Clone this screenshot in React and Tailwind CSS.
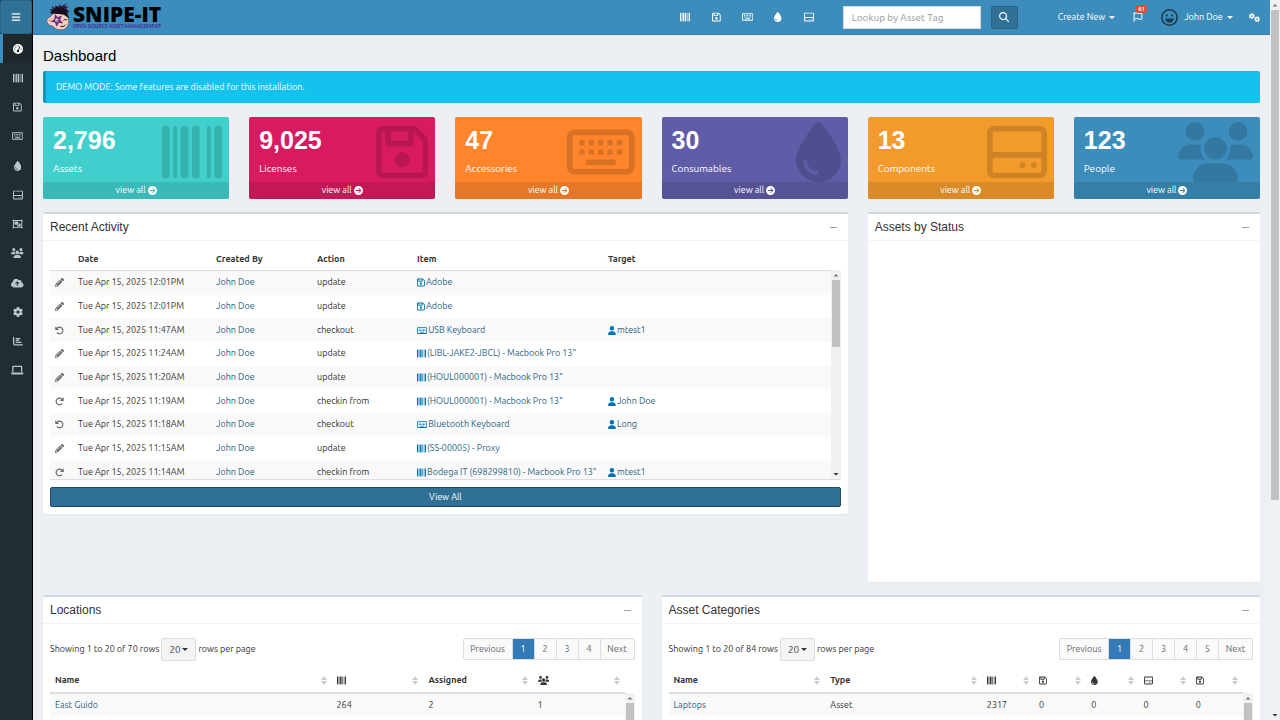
import React from "react";
import { FaPencilAlt } from "react-icons/fa";
import {
    FaArrowRotateLeft,
    FaArrowRotateRight,
    FaBarcode,
    FaBars,
    FaChartBar,
    FaCircleArrowRight,
    FaCloudArrowUp,
    FaDroplet,
    FaGaugeHigh,
    FaGear,
    FaGears,
    FaLaptop,
    FaMagnifyingGlass,
    FaMinus,
    FaRegFaceLaugh,
    FaRegFlag,
    FaRegFloppyDisk,
    FaRegHardDrive,
    FaRegKeyboard,
    FaRegObjectGroup,
    FaUser,
    FaUsers,
} from "react-icons/fa6";

// Font Awesome glyphs have different widths, so keep each one's own ratio
const glyphs = {
    dashboard: [FaGaugeHigh, "aspect-square"],
    barcode: [FaBarcode, "aspect-square"],
    floppy: [FaRegFloppyDisk, "aspect-[448/512]"],
    keyboard: [FaRegKeyboard, "aspect-[576/512]"],
    droplet: [FaDroplet, "aspect-[384/512]"],
    drive: [FaRegHardDrive, "aspect-square"],
    kits: [FaRegObjectGroup, "aspect-[576/512]"],
    users: [FaUsers, "aspect-[640/512]"],
    user: [FaUser, "aspect-[448/512]"],
    cloud: [FaCloudArrowUp, "aspect-[640/512]"],
    gear: [FaGear, "aspect-square"],
    gears: [FaGears, "aspect-[640/512]"],
    chart: [FaChartBar, "aspect-square"],
    laptop: [FaLaptop, "aspect-[640/512]"],
};

function Glyph({ name, className = "", ...props }) {
    const [Icon, ratio] = glyphs[name];
    return <Icon className={`w-auto shrink-0 ${ratio} ${className}`} {...props} />;
}

const sidebarItems = [
    { label: "Dashboard", icon: "dashboard", active: true },
    { label: "Assets", icon: "barcode" },
    { label: "Licenses", icon: "floppy" },
    { label: "Accessories", icon: "keyboard" },
    { label: "Consumables", icon: "droplet" },
    { label: "Components", icon: "drive" },
    { label: "Predefined Kits", icon: "kits" },
    { label: "People", icon: "users" },
    { label: "Import", icon: "cloud" },
    { label: "Settings", icon: "gear" },
    { label: "Reports", icon: "chart" },
    { label: "Requestable Items", icon: "laptop" },
];

const shortcuts = [
    { label: "Assets", icon: "barcode" },
    { label: "Licenses", icon: "floppy" },
    { label: "Accessories", icon: "keyboard" },
    { label: "Consumables", icon: "droplet" },
    { label: "Components", icon: "drive" },
];

const stats = [
    { value: "2,796", label: "Assets", icon: "barcode", color: "bg-[#40cfcc]" },
    { value: "9,025", label: "Licenses", icon: "floppy", color: "bg-[#d81b60]" },
    { value: "47", label: "Accessories", icon: "keyboard", color: "bg-[#ff852c]" },
    { value: "30", label: "Consumables", icon: "droplet", color: "bg-[#605ca8]" },
    { value: "13", label: "Components", icon: "drive", color: "bg-[#f39a2c]" },
    { value: "123", label: "People", icon: "users", color: "bg-[#3c8dbc]" },
];

const activity = [
    { date: "Tue Apr 15, 2025 12:01PM", action: "update", icon: "floppy", item: "Adobe" },
    { date: "Tue Apr 15, 2025 12:01PM", action: "update", icon: "floppy", item: "Adobe" },
    { date: "Tue Apr 15, 2025 11:47AM", action: "checkout", icon: "keyboard", item: "USB Keyboard", target: "mtest1" },
    { date: "Tue Apr 15, 2025 11:24AM", action: "update", icon: "barcode", item: '(LIBL-JAKE2-JBCL) - Macbook Pro 13"' },
    { date: "Tue Apr 15, 2025 11:20AM", action: "update", icon: "barcode", item: '(HOUL000001) - Macbook Pro 13"' },
    { date: "Tue Apr 15, 2025 11:19AM", action: "checkin from", icon: "barcode", item: '(HOUL000001) - Macbook Pro 13"', target: "John Doe" },
    { date: "Tue Apr 15, 2025 11:18AM", action: "checkout", icon: "keyboard", item: "Bluetooth Keyboard", target: "Long" },
    { date: "Tue Apr 15, 2025 11:15AM", action: "update", icon: "barcode", item: "(SS-00005) - Proxy" },
    { date: "Tue Apr 15, 2025 11:14AM", action: "checkin from", icon: "barcode", item: 'Bodega IT (698299810) - Macbook Pro 13"', target: "mtest1" },
];

const actionIcons = {
    update: FaPencilAlt,
    checkout: FaArrowRotateLeft,
    "checkin from": FaArrowRotateRight,
};

function Caret() {
    return (
        <svg viewBox="0 0 6 3" className="h-[3px] w-[6px] shrink-0" aria-hidden="true">
            <path d="M0 0h6L3 3z" fill="currentColor" />
        </svg>
    );
}

function Scrollbar({ thumb, className = "" }) {
    return (
        <div
            className={`flex w-[10px] shrink-0 flex-col items-center overflow-hidden bg-[#f1f1f1] ${className}`}
            aria-hidden="true"
        >
            <svg viewBox="0 0 10 10" className="size-[10px] shrink-0">
                <path d="M2.5 6.5h5L5 4z" fill="#777" />
            </svg>
            <div className={`w-[8px] shrink-0 bg-[#c1c1c1] ${thumb}`}></div>
            <svg viewBox="0 0 10 10" className="mt-auto size-[10px] shrink-0">
                <path d="M2.5 4h5L5 6.5z" fill="#333" />
            </svg>
        </div>
    );
}

function Logo() {
    return (
        <a href="#home" className="flex items-center gap-px" aria-label="Snipe-IT">
            <svg viewBox="0 0 26 28" className="h-[28px] w-[26px]" aria-hidden="true">
                {/* Hair */}
                <path
                    d="M6 11 3.600 9.800 5.800 8.800 4 6 7.200 6.400 5.800 3.400 9.400 5 9.400 2.200 12 4 14 1.200 15 3.400 20.600.400 18.800 3.600 22.600 3.800 20 6 23.400 8.800 21.200 9.600 22.800 15 12 9.600z"
                    fill="#16101f"
                />
                <path
                    d="m5.800 3.400 2.800 2.600M20.600.4l-4 4.400M22.600 3.800l-4.600 2M14 1.200l-.4 3.400"
                    stroke="#7a2a8c"
                    strokeWidth=".7"
                />
                {/* Face */}
                <path
                    d="M4.200 14.200C6 10.800 9.600 9.400 14.400 9.800c5 .6 8 3.600 8.200 8 .2 5-2.400 8.800-7.400 9-3.600.2-6.600-1.200-8.400-3.800C3.800 22.800.8 20.600 1 17.600c.2-2.400 1.600-3.400 3.200-3.400z"
                    fill="#f6cdc0"
                    stroke="#4a2a3b"
                    strokeWidth=".4"
                />
                <path d="m8 11 4-2.400 5-.2 4 2.600 1.800 4-5-3.200-5.400-.8z" fill="#16101f" />
                {/* Star around the eye */}
                <path
                    d="m9.200 11.600 2.200 2.800 4-1.200-1.600 3.600 2.800 3.200-4-.4-2 3.600-1.200-4-4-.8 3.400-2.400z"
                    fill="#7b2d96"
                    stroke="#3b1350"
                    strokeWidth=".5"
                />
                <circle cx="10.800" cy="17" r="1.500" fill="#fff" />
                <circle cx="11" cy="17.100" r=".7" fill="#111" />
                <path
                    d="M17.600 17.400c1-1.100 2.600-1.100 3.600-.2M14.400 23.200c2 .9 4 .2 5.200-1.600"
                    fill="none"
                    stroke="#111"
                    strokeWidth="1"
                />
                <path d="M2.600 17.200c1.200-.4 2 .2 2.200 1.600" fill="none" stroke="#a0594f" strokeWidth=".7" />
            </svg>
            <span className="flex flex-col">
                <span className="font-['Open_Sans',sans-serif] text-[21px] leading-[18px] font-extrabold text-black">
                    SNIPE-IT
                </span>
                <span className="font-['Lato',sans-serif] text-[5px] leading-[6px] font-bold whitespace-nowrap text-[#4b2a9b]">
                    OPEN SOURCE ASSET MANAGEMENT
                </span>
            </span>
        </a>
    );
}

function TopBar() {
    return (
        <header className="flex h-[35px] shrink-0 items-center border-b border-[#367fa9] bg-[#3c8dbc] pr-[10px] pl-[13px] text-white">
            <Logo />
            <nav className="ml-auto flex items-center">
                {shortcuts.map(({ label, icon }) => (
                    <a
                        key={label}
                        href={`#${label.toLowerCase()}`}
                        aria-label={label}
                        className="flex w-[31px] justify-center"
                    >
                        <Glyph name={icon} className="h-[10px]" />
                    </a>
                ))}
            </nav>
            <form className="ml-[18px] flex gap-[10px]" onSubmit={(e) => e.preventDefault()}>
                <input
                    type="text"
                    aria-label="Lookup by Asset Tag"
                    placeholder="Lookup by Asset Tag"
                    className="h-[23px] w-[138px] border border-[#d2d6de] bg-white px-2 text-[10px] text-[#555] placeholder:text-[#999]"
                />
                <button
                    type="submit"
                    aria-label="Search"
                    className="flex h-[23px] w-[27px] items-center justify-center rounded-xs border border-[#2a6384] bg-[#307095]"
                >
                    <FaMagnifyingGlass size={10} />
                </button>
            </form>
            <button type="button" className="ml-10 flex items-center gap-1">
                Create New
                <Caret />
            </button>
            <a href="#alerts" aria-label="Alerts" className="relative ml-[18px]">
                <FaRegFlag size={10} />
                <span className="absolute -top-[7px] left-[3px] rounded-xs bg-[#dd4b39] px-[2px] text-[6px] leading-[8px] font-bold">
                    61
                </span>
            </a>
            <button type="button" className="ml-[18px] flex items-center gap-1">
                <FaRegFaceLaugh size={17} className="mr-[2px] text-[#1c3a50]" />
                John Doe
                <Caret />
            </button>
            <a href="#admin" aria-label="Admin settings" className="ml-4">
                <Glyph name="gears" className="h-[9px]" />
            </a>
        </header>
    );
}

function Sidebar() {
    return (
        <aside className="flex w-[33px] shrink-0 flex-col border-r border-black bg-[#222d32]">
            <button
                type="button"
                aria-label="Toggle navigation"
                className="flex h-[34px] items-center justify-center rounded-xs border border-[#2a6384] bg-[#307095] text-white"
            >
                <FaBars size={10} />
            </button>
            <nav className="flex h-[351px] flex-col">
                {sidebarItems.map(({ label, icon, active }) => (
                    <a
                        key={label}
                        href={`#${label.toLowerCase()}`}
                        aria-label={label}
                        className={`flex flex-1 items-center justify-center border-l-3 ${
                            active
                                ? "border-[#3c8dbc] bg-[#1e282c] text-white"
                                : "border-transparent text-[#b8c7ce]"
                        }`}
                    >
                        <Glyph name={icon} className="h-[10px]" />
                    </a>
                ))}
            </nav>
        </aside>
    );
}

function StatCard({ value, label, icon, color }) {
    return (
        <a
            href={`#${label.toLowerCase()}`}
            className={`relative flex h-[82px] flex-col rounded-xs text-white ${color}`}
        >
            <div className="flex-1 px-[10px] pt-[10px]">
                <p className="font-['Liberation_Sans',sans-serif] text-[25px] leading-[27px] font-bold">
                    {value}
                </p>
                <p className="mt-[7px] text-[10px] leading-[15px]">{label}</p>
            </div>
            <Glyph name={icon} className="absolute top-[5px] right-[7px] h-[60px] text-black/15" />
            <div className="flex h-[17px] items-center justify-center gap-[2px] bg-black/10">
                view all
                <FaCircleArrowRight size={9} />
            </div>
        </a>
    );
}

function Box({ title, className = "", children }) {
    return (
        <section className={`rounded-xs border-t-2 border-[#d2d6de] bg-white shadow-xs ${className}`}>
            <div className="flex h-[27px] items-center justify-between border-b border-[#f4f4f4] px-[7px]">
                <h2 className="font-['Liberation_Sans',sans-serif] text-[12px] leading-[14px]">{title}</h2>
                <button type="button" aria-label={`Collapse ${title}`} className="mr-[3px] text-[#97a0b3]">
                    <FaMinus size={9} />
                </button>
            </div>
            <div className="p-[7px]">{children}</div>
        </section>
    );
}

function RecentActivity() {
    return (
        <Box title="Recent Activity" className="self-start">
            <div className="flex h-[232px] overflow-hidden border-b border-[#ddd]">
                <div className="min-w-0 flex-1">
                    <table className="h-[236px] w-full table-fixed text-left">
                        <colgroup>
                            <col className="w-[23px]" />
                            <col className="w-[138px]" />
                            <col className="w-[101px]" />
                            <col className="w-[100px]" />
                            <col className="w-[191px]" />
                            <col />
                        </colgroup>
                        <thead>
                            <tr className="h-[22px] border-b border-[#ddd]">
                                <th></th>
                                <th className="px-[5px] pt-[2px]">Date</th>
                                <th className="px-[5px] pt-[2px]">Created By</th>
                                <th className="px-[5px] pt-[2px]">Action</th>
                                <th className="px-[5px] pt-[2px]">Item</th>
                                <th className="px-[5px] pt-[2px]">Target</th>
                            </tr>
                        </thead>
                        <tbody>
                            {activity.map((row, i) => {
                                const ActionIcon = actionIcons[row.action];
                                return (
                                    <tr key={i} className="odd:bg-[#f9f9f9]">
                                        <td className="px-[5px]">
                                            <ActionIcon size={9} className="text-[#666]" />
                                        </td>
                                        <td className="px-[5px]">{row.date}</td>
                                        <td className="px-[5px]">
                                            <a href="#user" className="text-[#296282]">John Doe</a>
                                        </td>
                                        <td className="px-[5px]">{row.action}</td>
                                        <td className="px-[5px]">
                                            <a href="#item" className="flex items-center gap-px whitespace-nowrap text-[#296282]">
                                                <Glyph name={row.icon} className="h-[9px] text-[#0073b7]" />
                                                {row.item}
                                            </a>
                                        </td>
                                        <td className="px-[5px]">
                                            {row.target && (
                                                <a href="#target" className="flex items-center gap-px text-[#296282]">
                                                    <Glyph name="user" className="h-[9px] text-[#0073b7]" />
                                                    {row.target}
                                                </a>
                                            )}
                                        </td>
                                    </tr>
                                );
                            })}
                        </tbody>
                    </table>
                </div>
                <Scrollbar thumb="h-[67px]" className="mt-[22px]" />
            </div>
            <button
                type="button"
                className="mt-[7px] h-5 w-full rounded-xs border border-[#1f4a63] bg-[#307095] text-white"
            >
                View All
            </button>
        </Box>
    );
}

function SortIcon() {
    return (
        <svg viewBox="0 0 6 9" className="ml-auto h-[9px] w-[6px] shrink-0 text-[#ccc]" aria-hidden="true">
            <path d="M0 4h6L3 0zM0 5h6L3 9z" fill="currentColor" />
        </svg>
    );
}

function TableToolbar({ id, total, pages }) {
    return (
        <div className="mt-[7px] flex items-start justify-between">
            <div className="flex items-center">
                <span>Showing 1 to 20 of {total} rows</span>
                <span className="relative mx-[2px] flex items-center">
                    <select
                        id={id}
                        defaultValue="20"
                        className="h-[23px] w-[35px] appearance-none rounded-xs border border-[#ddd] bg-[#f4f4f4] pl-[7px] text-[10px] text-[#444]"
                    >
                        <option>20</option>
                        <option>50</option>
                        <option>100</option>
                    </select>
                    <span className="pointer-events-none absolute right-2">
                        <Caret />
                    </span>
                </span>
                <label htmlFor={id}>rows per page</label>
            </div>
            <nav className="flex h-[22px] divide-x divide-[#ddd] overflow-hidden rounded-xs border border-[#ddd] bg-[#fafafa] text-[#666]">
                <button type="button" className="w-[49px]">Previous</button>
                {pages.map((page) => (
                    <button
                        key={page}
                        type="button"
                        className={page === 1 ? "w-[22px] bg-[#337ab7] text-white" : "w-[22px]"}
                    >
                        {page}
                    </button>
                ))}
                <button type="button" className="w-[33px]">Next</button>
            </nav>
        </div>
    );
}

function DataTable({ columns, rows }) {
    return (
        <div className="mt-2 flex items-start">
            <table className="min-w-0 flex-1 table-fixed text-left">
                <colgroup>
                    {columns.map((col) => (
                        <col key={col.key} className={col.width} />
                    ))}
                </colgroup>
                <thead>
                    <tr className="h-6 border-b-2 border-[#ddd]">
                        {columns.map(({ key, label, icon }) => (
                            <th key={key} className="px-[5px]">
                                <span className="flex items-center">
                                    {icon ? <Glyph name={icon} className="h-[9px]" aria-label={label} /> : label}
                                    <SortIcon />
                                </span>
                            </th>
                        ))}
                    </tr>
                </thead>
                <tbody>
                    {rows.map((row) => (
                        <tr key={row[0]} className="h-6 odd:bg-[#f9f9f9]">
                            {row.map((cell, i) => (
                                <td key={i} className="px-[5px]">
                                    {i === 0 ? (
                                        <a href="#details" className="text-[#296282]">{cell}</a>
                                    ) : (
                                        cell
                                    )}
                                </td>
                            ))}
                        </tr>
                    ))}
                </tbody>
            </table>
            <Scrollbar thumb="h-10" className="mt-6 h-[60px]" />
        </div>
    );
}

export default function App() {
    return (
        <div className="flex h-screen overflow-hidden bg-[#ecf0f5] font-['Ubuntu','Open_Sans',sans-serif] text-[9px] leading-[13px] text-[#333]">
            <Sidebar />

            <div className="flex min-w-0 flex-1 flex-col">
                <TopBar />

                {/* Page content */}
                <main className="min-h-0 flex-1 overflow-hidden px-[10px]">
                    <h1 className="pt-3 font-['Liberation_Sans',sans-serif] text-[15px] leading-[18px] text-black">
                        Dashboard
                    </h1>
                    <div
                        role="alert"
                        className="mt-[6px] flex h-8 items-center rounded-xs border-l-[3px] border-[#1296bd] bg-[#14c2ee] px-[10px] text-white"
                    >
                        DEMO MODE: Some features are disabled for this installation.
                    </div>

                    {/* Totals */}
                    <div className="mt-[14px] grid grid-cols-6 gap-5">
                        {stats.map((stat) => (
                            <StatCard key={stat.label} {...stat} />
                        ))}
                    </div>

                    <div className="mt-[13px] grid min-h-[370px] grid-cols-3 gap-5">
                        <div className="col-span-2">
                            <RecentActivity />
                        </div>
                        <Box title="Assets by Status" />
                    </div>

                    <div className="mt-[13px] grid grid-cols-2 gap-5">
                        <Box title="Locations">
                            <TableToolbar id="locations-size" total={70} pages={[1, 2, 3, 4]} />
                            <DataTable
                                columns={[
                                    { key: "name", label: "Name", width: "w-[49%]" },
                                    { key: "assets", label: "Assets", icon: "barcode", width: "w-[16%]" },
                                    { key: "assigned", label: "Assigned", width: "w-[19%]" },
                                    { key: "people", label: "People", icon: "users", width: "w-[16%]" },
                                ]}
                                rows={[["East Guido", 264, 2, 1]]}
                            />
                        </Box>
                        <Box title="Asset Categories">
                            <TableToolbar id="categories-size" total={84} pages={[1, 2, 3, 4, 5]} />
                            <DataTable
                                columns={[
                                    { key: "name", label: "Name", width: "w-[27%]" },
                                    { key: "type", label: "Type", width: "w-[27%]" },
                                    { key: "assets", label: "Assets", icon: "barcode", width: "w-[9%]" },
                                    { key: "licenses", label: "Licenses", icon: "floppy", width: "w-[9%]" },
                                    { key: "consumables", label: "Consumables", icon: "droplet", width: "w-[9%]" },
                                    { key: "components", label: "Components", icon: "drive", width: "w-[9%]" },
                                    { key: "seats", label: "Seats", icon: "floppy", width: "w-[9%]" },
                                ]}
                                rows={[["Laptops", "Asset", 2317, 0, 0, 0, 0]]}
                            />
                        </Box>
                    </div>
                </main>
            </div>

            <Scrollbar thumb="h-[490px]" />
        </div>
    );
}
